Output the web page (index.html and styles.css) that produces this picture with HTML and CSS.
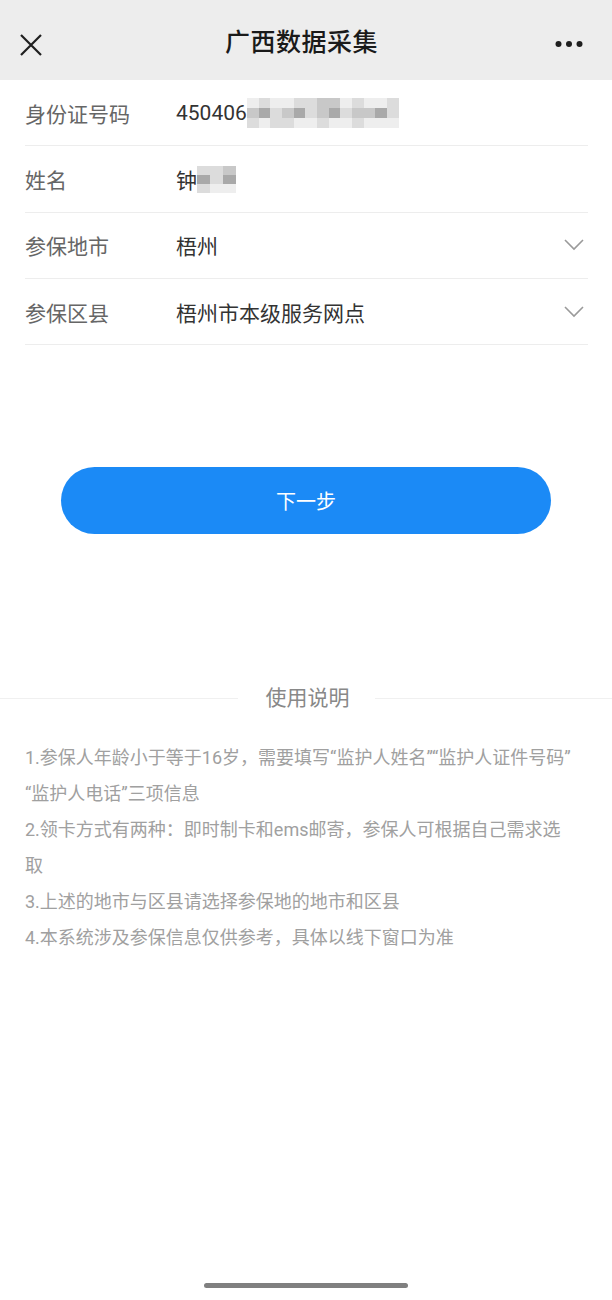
FILE: index.html
```html
<!DOCTYPE html>
<html lang="zh-CN">
    <head>
        <meta charset="UTF-8" />
        <meta name="viewport" content="width=device-width, initial-scale=1.0" />
        <title>广西数据采集</title>

        <link rel="stylesheet" href="styles.css">
    </head>
    <body>
        <header class="topbar">
            <a class="topbar-close">
                <svg width="22" height="22" viewBox="0 0 22 22">
                    <path d="M1 1 L21 21 M21 1 L1 21" stroke="#1f1f1f" stroke-width="2.2" fill="none" />
                </svg>
            </a>
            <h1>广西数据采集</h1>
            <a class="topbar-more">
                <svg width="28" height="8" viewBox="0 0 28 8">
                    <circle cx="3.5" cy="4" r="3" fill="#1f1f1f" />
                    <circle cx="14" cy="4" r="3" fill="#1f1f1f" />
                    <circle cx="24.5" cy="4" r="3" fill="#1f1f1f" />
                </svg>
            </a>
        </header>

        <main>
            <form class="info-form" action="javascript:void(0)">
                <div class="form-row">
                    <label>身份证号码</label>
                    <div class="form-value">
                        450406<span class="mosaic mosaic-id">
                            <i class="s0"></i><i class="s1"></i><i class="s0"></i><i class="s0"></i><i class="s1"></i><i class="s1"></i><i class="s2"></i><i class="s2"></i><i class="s0"></i><i class="s1"></i><i class="s0"></i><i class="s0"></i><i class="s1"></i>
                            <i class="s2"></i><i class="s3"></i><i class="s1"></i><i class="s2"></i><i class="s3"></i><i class="s1"></i><i class="s2"></i><i class="s3"></i><i class="s1"></i><i class="s2"></i><i class="s2"></i><i class="s3"></i><i class="s1"></i>
                            <i class="s1"></i><i class="s0"></i><i class="s1"></i><i class="s1"></i><i class="s0"></i><i class="s0"></i><i class="s1"></i><i class="s0"></i><i class="s0"></i><i class="s1"></i><i class="s0"></i><i class="s0"></i><i class="s0"></i>
                        </span>
                    </div>
                </div>
                <div class="form-row">
                    <label>姓名</label>
                    <div class="form-value">
                        钟<span class="mosaic mosaic-name">
                            <i class="s1"></i><i class="s1"></i><i class="s2"></i>
                            <i class="s3"></i><i class="s1"></i><i class="s3"></i>
                            <i class="s1"></i><i class="s0"></i><i class="s0"></i>
                        </span>
                    </div>
                </div>
                <div class="form-row">
                    <label>参保地市</label>
                    <div class="form-value">梧州</div>
                    <svg class="chevron" width="20" height="12" viewBox="0 0 20 12">
                        <path d="M1 1 L10 10 L19 1" stroke="#9a9a9a" stroke-width="1.6" fill="none" />
                    </svg>
                </div>
                <div class="form-row">
                    <label>参保区县</label>
                    <div class="form-value">梧州市本级服务网点</div>
                    <svg class="chevron" width="20" height="12" viewBox="0 0 20 12">
                        <path d="M1 1 L10 10 L19 1" stroke="#9a9a9a" stroke-width="1.6" fill="none" />
                    </svg>
                </div>

                <button type="submit" class="next-btn">下一步</button>
            </form>

            <section class="notes">
                <h2 class="notes-title"><span>使用说明</span></h2>
                <p>1.参保人年龄小于等于16岁，需要填写“监护人姓名”“监护人证件号码”“监护人电话”三项信息</p>
                <p>2.领卡方式有两种：即时制卡和ems邮寄，参保人可根据自己需求选<br>取</p>
                <p>3.上述的地市与区县请选择参保地的地市和区县</p>
                <p>4.本系统涉及参保信息仅供参考，具体以线下窗口为准</p>
            </section>
        </main>

        <div class="home-bar"></div>
    </body>
</html>
```

FILE: styles.css
```css
* {
    font-family: Roboto, "Noto Sans CJK SC", sans-serif;
    box-sizing: border-box;
}
body {
    margin: 0;
    background: #fff;
    height: 1300px;
}
.topbar {
    height: 80px;
    background: #ededed;
    display: grid;
    grid-template-columns: 1fr auto 1fr;
    align-items: center;
    padding: 0 29px 0 20px;
}
.topbar h1 {
    margin: 0;
    font-size: 25px;
    font-weight: 500;
    color: #1a1a1a;
    letter-spacing: 0.5px;
}
.topbar-close {
    display: flex;
    margin-top: 9px;
}
.topbar-more {
    display: flex;
    justify-content: flex-end;
    margin-top: 8px;
}
.info-form {
    margin: 0;
}
.form-row {
    display: flex;
    align-items: center;
    height: 66.3px;
    margin: 0 24px 0 25px;
    border-bottom: 1px solid #ededed;
}
.form-row label {
    width: 151px;
    font-size: 21px;
    color: #666;
}
.form-value {
    flex: 1;
    font-size: 21px;
    color: #333;
    display: flex;
    align-items: center;
}
.chevron {
    margin-right: 4px;
}
.mosaic {
    display: inline-grid;
    grid-auto-rows: 10px;
}
.mosaic i {
    display: block;
}
.mosaic-id {
    grid-template-columns: repeat(13, 11.7px);
    margin-top: 1px;
}
.mosaic-name {
    grid-template-columns: repeat(3, 13px);
    grid-auto-rows: 9px;
    margin-top: 2px;
}
.s0 { background: #eeeeee; }
.s1 { background: #dcdcdc; }
.s2 { background: #c8c8c8; }
.s3 { background: #a9a9a9; }
.next-btn {
    display: block;
    width: 490px;
    height: 67px;
    margin: 122px auto 0 61px;
    border: none;
    border-radius: 34px;
    background: #1b8af6;
    color: #fff;
    font-size: 20px;
    cursor: pointer;
}
.notes {
    padding: 0 25px;
}
.notes-title {
    display: flex;
    align-items: center;
    margin: 149px -25px 27px;
    font-size: 21px;
    font-weight: normal;
    color: #888;
    line-height: 30px;
}
.notes-title::before,
.notes-title::after {
    content: "";
    flex: 1;
    height: 1px;
    background: #f0f0f0;
}
.notes-title span {
    padding: 0 25px 0 28px;
}
.notes p {
    margin: 0;
    font-size: 18px;
    line-height: 36px;
    color: #a0a0a0;
}
.home-bar {
    position: fixed;
    left: 204px;
    bottom: 12px;
    width: 204px;
    height: 5px;
    border-radius: 3px;
    background: #808080;
}
```
